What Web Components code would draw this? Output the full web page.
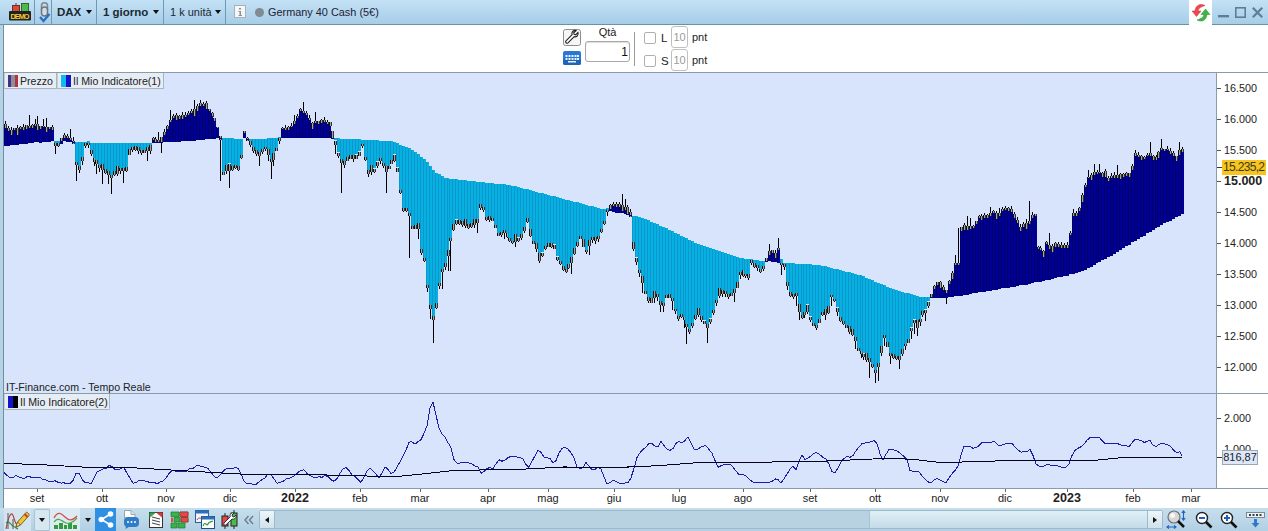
<!DOCTYPE html>
<html lang="it"><head><meta charset="utf-8"><title>DAX</title>
<style>html,body{margin:0;padding:0;background:#fff;overflow:hidden}body{font:11px "Liberation Sans",Arial,sans-serif;color:#222}</style>
</head><body>
<app-shell></app-shell>
<script>
const ICONS={
demo:[24,18,`<rect x="4.5" y="2.5" width="7" height="7" fill="#d64a3a" stroke="#7a2a20"/><path d="M8 0v3" stroke="#7a2a20"/><rect x="13.5" y=".5" width="7" height="9" fill="#52b64a" stroke="#2a6a28"/><rect x="1" y="8" width="22" height="9.5" rx="1" fill="#222"/><text x="12" y="15.6" font-family="Liberation Sans" font-weight="700" font-size="7.4" fill="#f2cc30" text-anchor="middle" textLength="19">DEMO</text>`],
link:[13,21,`<rect x="3.5" y=".8" width="6" height="9.5" rx="3" fill="none" stroke="#7b8790" stroke-width="1.5"/><rect x="3.5" y="5" width="6" height="9" rx="3" fill="#d5dde2" stroke="#6b7780" stroke-width="1.5"/><path d="M2 15l3.500 4 6-7" fill="none" stroke="#2a6fc0" stroke-width="2.200"/>`],
info:[13,14,`<rect x=".5" y=".5" width="11" height="12" fill="#f4f6f7" stroke="#a9b1b6"/><path d="M5 3h2v1.500H5zM4.500 6H7v4h1v1H4.500v-1h1V7h-1z" fill="#8a9297"/>`],
wrench:[18,17,`<rect x=".5" y=".5" width="17" height="16" rx="2" fill="#f6f6f6" stroke="#8d8d8d"/><path d="M15 3.500l-2.300 2.300-1.600-.4-.4-1.600L13 1.600c-2-.7-4.100.7-4.100 2.900 0 .5.100.9.200 1.200L3 11.800c-1.200 1.300.7 3.200 2 2l6.200-6.100c2.300.8 4.700-1.600 3.800-4.200z" fill="#fff" stroke="#222" stroke-width="1.100"/>`],
keyboard:[18,14,`<rect width="18" height="14" rx="2" fill="#2a78d2"/><rect y="8" width="18" height="6" rx="2" fill="#1e64b8"/><path d="M2.500 4h2v2h-2zM5.500 4h2v2h-2zM8.500 4h2v2h-2zM11.500 4h2v2h-2zM14 4h2v2h-2zM2.500 7h2v2h-2zM5.500 7h2v2h-2zM8.500 7h2v2h-2zM11.500 7h2v2h-2zM14 7h2v2h-2zM5 10h8v1.500H5z" fill="#e8f2fc"/>`],
sync:[20,19,`<path d="M14 2.500C9.500 0 4.500 2 4 8H1l4.500 5.500L10 8H7c.4-3 3.500-4.200 7-5.500z" fill="#ec4a4f" stroke="#c93338" stroke-width=".5"/><path d="M6 17c4.500 2.500 9.500.5 10-5.500h3L14.500 6 10 11.500h3c-.4 3-3.500 4.300-7 5.500z" fill="#3fb548" stroke="#2b8f34" stroke-width=".5"/>`],
min:[11,11,`<rect y="8" width="11" height="2.400" fill="#5c7f95"/>`],
max:[11,11,`<rect x=".8" y=".8" width="9.400" height="9.400" fill="none" stroke="#5c7f95" stroke-width="1.600"/>`],
close:[11,11,`<path d="M.8.800l9.400 9.400M10.200.800L.8 10.200" stroke="#5c7f95" stroke-width="2.200"/>`],
pencil:[26,20,`<path d="M1 19C3 9 5 3 7 4s3 12 6 11 3-4 5-6" fill="none" stroke="#b03a3a" stroke-width="1.100"/><path d="M1 13c3-3 5 2 7 3s3 2 5 3" fill="none" stroke="#3a8a3a" stroke-width="1.100"/><path d="M3 3v16M8 9v10" stroke="#555"/><path d="M11 17l1.500-5L21 2.500c1-1 4 2 3 3L15.500 15z" fill="#f2c533" stroke="#7a6420"/><path d="M19.500 4l3 3" stroke="#c23b3b" stroke-width="2"/><path d="M11 17l1.500-5 3 3z" fill="#f4e3c0" stroke="#7a6420"/>`],
ind:[25,20,`<rect x="1" y="15" width="4" height="4" fill="#2f9e3a"/><rect x="6" y="13" width="4" height="6" fill="#2f9e3a"/><rect x="11" y="15" width="3" height="4" fill="#2f9e3a"/><rect x="15" y="13" width="4" height="6" fill="#2f9e3a"/><rect x="20" y="15" width="4" height="4" fill="#2f9e3a"/><path d="M1 8C5 0 9 4 12 7s7 5 12-1" fill="none" stroke="#d0524a" stroke-width="1.300"/><path d="M1 12c4-5 7-2 10 0s8 2 13-4" fill="none" stroke="#58a84f" stroke-width="1.300"/>`],
share:[16,17,`<path d="M12.500 3L3.500 8.500l9 5.500" fill="none" stroke="#fff" stroke-width="1.600"/><circle cx="12.500" cy="3" r="2.800" fill="#fff"/><circle cx="3.300" cy="8.500" r="2.800" fill="#fff"/><circle cx="12.500" cy="14" r="2.800" fill="#fff"/>`],
chat:[17,20,`<path d="M1.500.5H8l4 4V8H1.500z" fill="#fff" stroke="#9aa5ad"/><path d="M8 .5v4h4" fill="#e4e9ed" stroke="#9aa5ad"/><rect x="1" y="7" width="15" height="10" rx="4" fill="#2f7cc9"/><path d="M3 15l-.500 4 5-3z" fill="#2f7cc9"/><circle cx="5" cy="12" r="1" fill="#fff"/><circle cx="8.500" cy="12" r="1" fill="#fff"/><circle cx="12" cy="12" r="1" fill="#fff"/>`],
list:[14,16,`<rect x=".5" y=".5" width="13" height="15" fill="#fff" stroke="#333"/><path d="M7 .5h6.500V6z" fill="#d43b3b"/><path d="M.5 .5H7L.5 6z" fill="#3ba04a"/><path d="M3 5l8 2M3 8l8 2M3 11l8 2" stroke="#444"/>`],
bricks:[17,16,`<path d="M0 0h8v4.500H0zM9 0h8v4.500H9zM3 5.500h6V10H3zM10 5.500h7V10h-7zM0 11h6v5H0zM7 11h7v5H7z" fill="#38b34a" stroke="#1d7a2c" stroke-width=".7"/><path d="M9 0h8v4.500H9zM10 5.500h7V10h-7z" fill="#e24a4a" stroke="#a82c2c" stroke-width=".7"/><path d="M0 5.500h2V10H0z" fill="#e24a4a"/>`],
windows:[20,19,`<rect x=".5" y=".5" width="13" height="12" fill="#eef4fa" stroke="#2a5f9e"/><rect x=".5" y=".5" width="13" height="3" fill="#2f6fb8"/><path d="M2 10c2-4 4 0 6-3" fill="none" stroke="#c33" /><rect x="6.500" y="6.500" width="13" height="12" fill="#fff" stroke="#1f4f8a"/><rect x="6.500" y="6.500" width="13" height="3" fill="#2f6fb8"/><path d="M8 16c2-6 4 1 5-2s3-2 5-3" fill="none" stroke="#2a9a3a" stroke-width="1.200"/>`],
tool:[17,19,`<rect x="1" y="6" width="6" height="10" fill="#e14b4b" stroke="#222"/><path d="M4 3v3M4 16v3M13 0v3M13 16v3" stroke="#222"/><rect x="10" y="3" width="6" height="13" fill="#4dbb4b" stroke="#222"/><path d="M15 5l-2 2-1.500-.5L11 5l2-2c-2-.6-4 .7-4 2.700l.2 1.100L3 13c-1.100 1.200.7 3 1.900 1.900L11 9c2.300.8 4.800-1.500 4-4z" fill="#fff" stroke="#222" stroke-width=".9"/>`],
chev:[10,10,`<path d="M4.500 1L1 5l3.500 4M9 1L5.500 5 9 9" fill="none" stroke="#6d7d88" stroke-width="1.400"/>`],
zoomfit:[20,20,`<circle cx="7" cy="7" r="6" fill="#d7d7d7" stroke="#6f7378" stroke-width="1.200"/><circle cx="5.500" cy="5.500" r="2.500" fill="#fff" opacity=".8"/><path d="M11 11l6 6" stroke="#111" stroke-width="2.500"/><path d="M16.500 1v9M14.800 3l1.700-2.200L18.200 3M14.800 8l1.700 2.200L18.200 8M0 17h9M2 15.300L0 17l2 1.700M7 15.300L9 17l-2 1.700" fill="none" stroke="#1f5fc0" stroke-width="1.100"/>`],
zoomout:[18,18,`<circle cx="7" cy="7" r="5.500" fill="#fff" stroke="#222" stroke-width="1.400"/><path d="M4 7h6" stroke="#1f5fc0" stroke-width="2"/><path d="M11 11l5.500 5.500" stroke="#111" stroke-width="2.600"/>`],
zoomin:[18,18,`<circle cx="7" cy="7" r="5.500" fill="#fff" stroke="#222" stroke-width="1.400"/><path d="M4 7h6M7 4v6" stroke="#1f5fc0" stroke-width="2"/><path d="M11 11l5.500 5.500" stroke="#111" stroke-width="2.600"/>`],
grid:[19,16,`<rect x=".5" y=".5" width="18" height="5" fill="#eef3f6" stroke="#7b8a94"/><path d="M3 2h2v2H3zM6.500 2h2v2h-2zM10 2h2v2h-2zM13.500 2h2v2h-2z" fill="#34414a"/><path d="M8 7h3v4h2.500l-4 4.500-4-4.500H8z" fill="#2f78cf"/>`]
};
class UiIcon extends HTMLElement{connectedCallback(){const [w,h,b]=ICONS[this.getAttribute('name')];this.attachShadow({mode:'open'}).innerHTML=`<style>:host{display:inline-flex;flex:none}svg{display:block;overflow:visible}</style><svg width="${w}" height="${h}" viewBox="0 0 ${w} ${h}">${b}</svg>`}}
customElements.define('ui-icon',UiIcon);

class TbCell extends HTMLElement{connectedCallback(){const w=this.getAttribute('w'),b=this.hasAttribute('bold'),pl=this.getAttribute('pl')||0;this.attachShadow({mode:'open'}).innerHTML=`<style>:host{display:flex;align-items:center;flex:none;width:${w}px;height:24px;box-sizing:border-box;padding-left:${pl}px;border-right:1px solid #6f9ab4;font-size:${b?11.5:11}px;white-space:nowrap;${b?'font-weight:700;':''}color:#1a2a33}
.c{width:0;height:0;border:3px solid transparent;border-top:4px solid #111;border-bottom:0;margin-left:auto;margin-right:4px;flex:none}</style><slot></slot>${this.hasAttribute('caret')?'<span class="c"></span>':''}`}}
customElements.define('tb-cell',TbCell);

class TopBar extends HTMLElement{connectedCallback(){this.attachShadow({mode:'open'}).innerHTML=`<style>
:host{display:flex;height:25px;box-sizing:border-box;border-bottom:1px solid #6f8fa3;background:linear-gradient(#c4e1f5,#a6cde8);align-items:center;padding-left:4px;font-size:11px;color:#223}
.dot{width:9px;height:9px;border-radius:50%;background:#808a90;margin:0 4px 0 8px;flex:none}
.sp{flex:1}.tab{width:23px;height:25px;margin-bottom:-1px;background:#fff;display:flex;align-items:center;justify-content:center;flex:none}
.w{display:flex;gap:6px;width:56px;justify-content:flex-start;padding-left:6px;box-sizing:border-box}.t{white-space:nowrap;font-size:10.900px}
</style>
<tb-cell w="31" pl="4"><ui-icon name="demo"></ui-icon></tb-cell>
<tb-cell w="17" pl="3"><ui-icon name="link"></ui-icon></tb-cell>
<tb-cell w="45" pl="5" bold caret>DAX</tb-cell>
<tb-cell w="67" pl="6" bold caret>1 giorno</tb-cell>
<tb-cell w="62" pl="6" caret>1 k unità</tb-cell>
<span style="width:8px;flex:none"></span><ui-icon name="info"></ui-icon>
<span class="dot"></span><span class="t">Germany 40 Cash (5€)</span>
<span class="sp"></span><span class="tab"><ui-icon name="sync"></ui-icon></span>
<span class="w"><ui-icon name="min"></ui-icon><ui-icon name="max"></ui-icon><ui-icon name="close"></ui-icon></span>`}}
customElements.define('top-bar',TopBar);

class OrderBar extends HTMLElement{connectedCallback(){this.attachShadow({mode:'open'}).innerHTML=`<style>
:host{display:grid;height:48px;box-sizing:border-box;border-bottom:1px solid #8b9ca6;background:#fff;grid-template-columns:18px 45px 1px 44px 17px auto;grid-template-rows:23px 23px;column-gap:0;justify-content:start;padding:1px 0 0 559px;font-size:11px;color:#222}
.i{grid-column:1;display:flex;justify-content:center}
.q{grid-column:2;grid-row:1/3;display:flex;flex-direction:column;align-items:center;margin-left:4px;width:45px}
.q span{height:15px;line-height:13px}
.inp{width:45px;height:21px;box-sizing:border-box;border:1px solid #a8a8a8;border-radius:3px;text-align:right;padding:3px 1px 0 0;font-size:12px;color:#111;box-shadow:inset 0 1px 1px #ddd}
.s{grid-column:3;grid-row:1/3;width:1px;background:#9b9b9b;height:34px;margin:6px 0 0 8px}
.l{display:flex;align-items:center;grid-column:4;padding-left:17px;gap:5px;font-size:11.500px}
.b{width:12px;height:12px;box-sizing:border-box;border:1px solid #b0b0b0;border-radius:2px;background:#fff;flex:none}
.n{grid-column:5;width:17px;height:22px;box-sizing:border-box;border:1px solid #c0c0c0;border-radius:3px;color:#9a9a9a;text-align:center;line-height:20px;font-size:11px}
.p{grid-column:6;padding:0 0 0 4px;line-height:22px;font-size:11px}
</style>
<div class="i" style="grid-row:1;padding-top:3px"><ui-icon name="wrench"></ui-icon></div>
<div class="i" style="grid-row:2;padding-top:2px"><ui-icon name="keyboard"></ui-icon></div>
<div class="q"><span>Qtà</span><div class="inp">1</div></div>
<div class="s"></div>
<div class="l" style="grid-row:1"><span class="b"></span>L</div><div class="n" style="grid-row:1">10</div><div class="p" style="grid-row:1">pnt</div>
<div class="l" style="grid-row:2"><span class="b"></span>S</div><div class="n" style="grid-row:2">10</div><div class="p" style="grid-row:2">pnt</div>`}}
customElements.define('order-bar',OrderBar);

function lerp(pts,x){if(x<=pts[0][0])return pts[0][1];for(let i=1;i<pts.length;i++){if(x<=pts[i][0]){const[a,b]=pts[i-1],[c,d]=pts[i];return b+(d-b)*(x-a)/(c-a||1)}}return pts[pts.length-1][1]}
let seed=12345;const R=()=>{seed=(seed*16807)%2147483647;return seed/2147483647};
const MA=[[4,146],[30,143],[60,141],[100,143],[150,143],[190,141],[220,138],[250,139],[280,138],[330,138],[390,141],[410,148],[425,160],[435,172],[445,178],[480,182],[510,185],[560,198],[610,211],[640,217],[670,230],[700,245],[740,258],[770,262],[820,265],[860,275],[890,288],[920,297],[945,298],[1013,287],[1057,278],[1080,272],[1090,267],[1110,256],[1153,230],[1183,213]];
const PX=[[5,125],[10,131],[20,126],[30,126],[36,124],[45,127],[52,127],[53,143],[57,147],[62,136],[70,137],[73,140],[77,172],[81,165],[85,145],[88,143],[93,160],[100,167],[110,177],[120,170],[126,170],[130,148],[140,152],[150,150],[152,138],[160,140],[165,130],[172,116],[180,116],[190,112],[200,103],[207,104],[215,120],[220,135],[221,175],[226,170],[235,168],[240,170],[243,130],[248,140],[252,148],[258,155],[265,148],[272,162],[278,145],[282,128],[290,127],[300,110],[305,112],[312,122],[320,120],[330,122],[333,135],[338,155],[342,165],[350,158],[358,157],[362,145],[368,172],[375,170],[380,160],[387,173],[393,157],[398,175],[402,210],[408,210],[412,228],[418,228],[420,250],[425,263],[428,300],[433,320],[437,303],[440,275],[447,262],[450,240],[455,222],[465,225],[470,228],[477,222],[481,202],[485,217],[493,220],[497,235],[505,232],[510,242],[520,240],[527,222],[530,235],[536,248],[538,262],[545,248],[553,245],[557,258],[565,272],[570,265],[575,250],[580,238],[587,255],[590,240],[597,240],[603,227],[607,212],[610,205],[617,203],[622,205],[627,207],[630,212],[631,237],[635,257],[640,275],[645,293],[650,303],[656,295],[662,308],[667,293],[672,300],[675,310],[678,318],[683,315],[688,333],[692,325],[697,312],[702,320],[707,328],[713,312],[717,300],[720,292],[730,296],[736,290],[740,275],[748,277],[750,262],[757,268],[762,272],[765,262],[768,250],[775,252],[778,247],[780,262],[785,268],[788,293],[793,297],[797,295],[798,310],[803,318],[806,308],[811,322],[816,327],[822,315],[828,312],[832,290],[835,305],[840,320],[848,330],[853,335],[858,350],[865,358],[870,362],[875,372],[880,362],[883,333],[890,355],[900,358],[905,345],[910,340],[912,318],[918,328],[922,315],[927,308],[930,298],[935,283],[942,282],[945,298],[947,282],[950,280],[955,263],[958,262],[960,228],[962,225],[975,226],[977,217],[988,215],[992,210],[998,215],[1003,208],[1010,208],[1017,220],[1020,226],[1028,222],[1032,215],[1035,215],[1037,245],[1043,250],[1047,240],[1050,248],[1055,243],[1062,245],[1067,245],[1070,232],[1072,213],[1078,213],[1083,190],[1088,177],[1093,172],[1105,172],[1107,178],[1115,175],[1130,173],[1133,163],[1135,153],[1143,157],[1150,153],[1155,158],[1160,148],[1167,149],[1173,153],[1177,157],[1180,148],[1183,150]];
const SP=[[54,153],[77,180],[102,183],[111,193],[123,182],[162,152],[220,180],[228,187],[270,178],[303,102],[35,119],[342,192],[387,192],[410,257],[432,342],[442,288],[449,270],[624,199],[687,343],[707,342],[868,377],[878,380],[900,368],[917,335],[925,320],[959,228],[1149,142],[1030,201],[1099,164],[967,216],[971,218],[1048,233],[945,303]];
function priceSvg(){let wk='',bd='',fl='';const P=2.95;
 for(let i=0;i<402;i++){const xf=4.5+i*P;if(xf>1182)break;const x=Math.floor(xf),m=lerp(MA,x+1);let e=lerp(PX,x+1)+(R()-.5)*1.6;const up=e<m;
  const rr=R(),b=rr<.25?4+R()*3:1.5+R()*2,p=up?e+b:e-b;
  let w=R()<.2?3+R()*8:R()*3;let tip=up?e-w:e+w;
  for(const s of SP){if(Math.abs(s[0]-x-1)<=1.5){tip=s[1]}}
  const h=Math.abs(tip-e);
  wk+=`<rect x="${x+1}" y="${Math.round(Math.min(tip,e))}" width="1" height="${Math.round(h)+1}" fill="#000"/>`;
  const by=Math.round(Math.min(e,p)),bh=Math.round(Math.abs(e-p))+1;
  bd+=`<rect x="${x}" y="${by}" width="1" height="${bh}" fill="#111"/><rect x="${x+1}" y="${by}" width="1" height="${bh}" fill="#a4a4a4"/><rect x="${x+2}" y="${by}" width="1" height="${bh}" fill="#333"/>`;
  const t=Math.round(Math.min(p,m)),hh=Math.max(1,Math.round(Math.abs(p-m)));
  const nextx=Math.floor(xf+P),ww=nextx-x;
  fl+=up?`<rect x="${x}" y="${t}" width="${ww}" height="${hh}" fill="#000096"/><rect x="${x}" y="${t}" width="1" height="${hh}" fill="#00006a"/>`:`<rect x="${x}" y="${t}" width="${ww}" height="${hh}" fill="#06b0e2"/><rect x="${x}" y="${t}" width="1" height="${hh}" fill="#0a98cb"/>`;
 }return wk+bd+fl}
const mapZ=(a,f)=>a.map(([x,y])=>f(x,y));
const B1=[[10,265],[25,280],[40,270],[55,280],[70,275],[100,280],[120,290],[135,288],[150,295],[175,295],[190,258],[205,293],[225,295],[235,265],[250,255],[270,242],[285,255],[305,248],[325,297],[340,285],[385,295],[400,290],[420,258],[450,260],[490,240],[510,250],[530,280],[555,250],[585,250],[600,295],[630,297],[660,265],[680,295],[720,275],[740,252],[770,280],[800,272],[820,292],[845,243],[860,265],[885,292],[905,248],[930,278],[945,240],[962,272],[995,195],[1005,165],[1015,180],[1030,165],[1045,130],[1055,55],[1062,52],[1070,100],[1078,145],[1090,155],[1105,190],[1115,235],[1145,230],[1170,245],[1180,268],[1195,245],[1210,250],[1222,222],[1235,230],[1250,212],[1280,218],[1295,250],[1320,190],[1335,222],[1345,215],[1358,238],[1375,188],[1388,188],[1405,215],[1415,250],[1425,255],[1437,230],[1450,255],[1470,245],[1488,298],[1505,285],[1515,295],[1540,295]];
const B2=[[0,265],[25,265],[45,185],[60,165],[78,140],[95,160],[108,140],[125,165],[135,165],[152,135],[163,145],[178,127],[195,168],[225,150],[245,185],[255,215],[290,208],[310,240],[330,240],[345,262],[380,265],[410,252],[420,265],[450,212],[462,225],[472,175],[485,195],[512,172],[540,195],[558,238],[585,188],[605,185],[628,150],[650,142],[668,133],[685,197],[705,160],[725,168],[750,195],[760,235],[775,225],[810,265],[825,247],[850,265],[885,210],[895,158],[905,153],[930,160],[945,145],[965,143],[975,137],[990,155],[1005,145],[1025,145],[1045,172],[1065,172],[1072,160],[1088,210],[1105,218],[1115,208],[1135,210],[1160,220],[1170,215],[1185,170],[1205,155],[1232,125],[1250,125],[1270,147],[1300,145],[1330,155],[1347,130],[1370,143],[1385,137],[1395,155],[1420,145],[1440,155],[1452,175],[1462,167],[1468,182]];
const K1=[[10,235],[115,240],[230,248],[305,247],[420,255],[530,263],[600,268],[800,270],[900,273],[985,273],[1050,265],[1100,258],[1200,254],[1290,252],[1380,246],[1540,247]];
const K2=[[0,217],[100,212],[190,204],[300,202],[500,200],[660,192],[720,190],[780,195],[840,203],[950,199],[1050,196],[1170,198],[1250,195],[1320,187],[1468,187]];
const f1=(x,y)=>[x/2.45,385+y/3],f2=(x,y)=>[620+x/2.613,395+y/3];
const blue=[[4,472.500],...mapZ(B1,f1),...mapZ(B2,f2)],black=[...mapZ(K1,f1),...mapZ(K2,f2)];
const pstr=a=>a.map(p=>p[0].toFixed(1)+','+p[1].toFixed(1)).join(' ');
function jag(a){const o=[];const end=a[a.length-1][0];for(let x=a[0][0];x<end;x+=3){o.push([x,lerp(a,x)+(R()-.5)*1.6])}o.push(a[a.length-1]);return o}

class LegendTab extends HTMLElement{connectedCallback(){const s=(this.getAttribute('colors')||'').split(',');this.attachShadow({mode:'open'}).innerHTML=`<style>:host{display:inline-flex;align-items:center;height:16px;box-sizing:border-box;background:#e6edf5;border:1px solid #a9b6c0;border-left-color:#c5ced6;border-top:0;padding:0 2px 0 3px;gap:2px;font-size:10.600px;color:#222;white-space:nowrap;width:var(--w)}.s{display:flex;height:12px;width:10px;flex:none}.s i{flex:1}</style><span class="s">${s.map(c=>`<i style="background:${c}"></i>`).join('')}</span><slot></slot>`}}
customElements.define('legend-tab',LegendTab);

const axisText=(x,y,t,b)=>`<text x="${x}" y="${y}" font-family="Liberation Sans" font-size="${b?12.5:10.800}" ${b?'font-weight="700"':''} fill="#222" shape-rendering="auto">${t}</text>`;
class PriceChart extends HTMLElement{connectedCallback(){
 let ax='';[['16.500',88],['16.000',119],['15.500',150],['15.000',181,1],['14.500',212],['14.000',243],['13.500',274],['13.000',305],['12.500',336],['12.000',367]].forEach(([t,y,b])=>{ax+=`<rect x="1217" y="${y}" width="4" height="1" fill="#555"/>`+axisText(1224,y+4,t,b)});
 this.attachShadow({mode:'open'}).innerHTML=`<style>:host{display:block;position:relative;height:321px;border-bottom:1px solid #8b9ca6;box-sizing:border-box;background:#fff}svg{display:block}
 .lg{position:absolute;left:0;top:0;display:flex}.src{position:absolute;left:2px;top:308px;font-size:10.600px;color:#222;white-space:nowrap}</style>
 <svg width="1264" height="320" viewBox="4 73 1264 320" shape-rendering="crispEdges"><rect x="4" y="73" width="1212" height="320" fill="#d7e4fb"/><rect x="1216" y="73" width="1" height="320" fill="#8b9ca6"/>${priceSvg()}${ax}
 <rect x="1217" y="167" width="5" height="1" fill="#333"/><rect x="1222" y="160" width="44" height="15" fill="#f8c51c"/><text x="1223" y="171" font-family="Liberation Sans" font-size="12" fill="#3a3a20" textLength="42">15.235,2</text></svg>
 <div class="lg"><legend-tab style="--w:53px" colors="#44308a,#8a8f98,#b4343c">Prezzo</legend-tab><legend-tab style="--w:107px" colors="#14b8f0,#1414c8">Il Mio Indicatore(1)</legend-tab></div>
 <div class="src">IT-Finance.com - Tempo Reale</div>`}}
customElements.define('price-chart',PriceChart);

class OscChart extends HTMLElement{connectedCallback(){
 this.attachShadow({mode:'open'}).innerHTML=`<style>:host{display:block;position:relative;height:95px;box-sizing:border-box;border-bottom:1px solid #8b9ca6;background:#fff}svg{display:block}
 .lg{position:absolute;left:0;top:0;display:flex}.tag{position:absolute;left:1218px;top:56px;width:36px;height:15px;box-sizing:border-box;background:#dde7f5;border:1px solid #9aa8b3;font-size:11px;line-height:13px;text-align:center;color:#223;white-space:nowrap}</style>
 <svg width="1264" height="94" viewBox="4 394 1264 94"><rect x="4" y="394" width="1212" height="94" fill="#d7e4fb"/><rect x="1216" y="394" width="1" height="94" fill="#8b9ca6"/>
 <polyline points="${pstr(jag(blue))}" fill="none" stroke="#1c1ca8" stroke-width="1" shape-rendering="crispEdges"/><polyline points="${pstr(black)}" fill="none" stroke="#000020" stroke-width="1" shape-rendering="crispEdges"/>
 <rect x="1217" y="418" width="4" height="1" fill="#555"/><rect x="1217" y="457" width="5" height="1" fill="#333"/>${axisText(1224,422,'2.000')}${axisText(1224,453,'1.000')}</svg>
 <div class="lg"><legend-tab style="--w:106px;border-bottom-right-radius:2px" colors="#1414c8,#000">Il Mio Indicatore(2)</legend-tab></div><div class="tag">816,87</div>`}}
customElements.define('osc-chart',OscChart);

class TimeAxis extends HTMLElement{connectedCallback(){
 const L=[['set',37],['ott',102],['nov',166],['dic',230],['2022',295,1],['feb',360],['mar',420],['apr',488],['mag',548],['giu',614],['lug',679],['ago',743],['set',810],['ott',875],['nov',940],['dic',1005],['2023',1067,1],['feb',1133],['mar',1191]];
 this.attachShadow({mode:'open'}).innerHTML=`<style>:host{display:block;height:19px;background:#fff}svg{display:block}</style><svg width="1264" height="19" viewBox="4 489 1264 19">${L.map(([t,x,b])=>`<rect x="${x}" y="489" width="1" height="3" fill="#666"/><text x="${x}" y="502" text-anchor="middle" font-family="Liberation Sans" font-size="${b?12.500:11}" ${b?'font-weight="700"':''} fill="#222">${t}</text>`).join('')}</svg>`}}
customElements.define('time-axis',TimeAxis);

class BottomBar extends HTMLElement{connectedCallback(){this.attachShadow({mode:'open'}).innerHTML=`<style>
:host{display:flex;align-items:center;height:23px;background:linear-gradient(#c6dfee,#b2d0e3);box-sizing:border-box}
.c{width:0;height:0;border:3.500px solid transparent;border-top:4px solid #111;border-bottom:0;display:block}
.cell{display:flex;align-items:center;justify-content:center;height:23px;flex:none;box-sizing:border-box}
.btn{background:#d7e7f1;border:1px solid #a9c3d3;height:22px;border-radius:2px}
.sb{display:flex;flex:none;margin-left:5px;width:904px;height:19px;border:1px solid #9fb9c9;box-sizing:border-box;border-radius:2px}
.a{width:14px;flex:none;background:linear-gradient(#eef6fa,#cfe2ec);display:flex;align-items:center;justify-content:center}
.a:first-child{border-right:1px solid #9fb9c9}.a:last-child{border-left:1px solid #9fb9c9}
.t{width:594px;flex:none;background:#b9d2e1}.th{flex:1;background:linear-gradient(#dff0f6,#c4dbe8);border-left:1px solid #a9c3d3}
.l{border:3.500px solid transparent;border-right:4px solid #111;border-left:0}.r{border:3.500px solid transparent;border-left:4px solid #111;border-right:0}
</style>
<span class="cell" style="width:4px"></span>
<span class="cell" style="width:27px;background:#d2e4ef"><ui-icon name="pencil"></ui-icon></span>
<span class="cell btn" style="width:16px;margin-left:3px"><i class="c"></i></span>
<span class="cell" style="width:30px;background:#dcebf3"><ui-icon name="ind"></ui-icon></span>
<span class="cell" style="width:15px"><i class="c"></i></span>
<span class="cell" style="width:21px;background:#2f8fe2"><ui-icon name="share"></ui-icon></span>
<span class="cell" style="width:31px"><ui-icon name="chat"></ui-icon></span>
<span class="cell" style="width:18px"><ui-icon name="list"></ui-icon></span>
<span class="cell" style="width:29px"><ui-icon name="bricks"></ui-icon></span>
<span class="cell" style="width:22px"><ui-icon name="windows"></ui-icon></span>
<span class="cell" style="width:27px"><ui-icon name="tool"></ui-icon></span>
<span class="cell" style="width:11px;justify-content:flex-end"><ui-icon name="chev"></ui-icon></span>
<div class="sb"><span class="a"><i class="l"></i></span><span class="t"></span><span class="th"></span><span class="a"><i class="r"></i></span></div>
<span class="cell" style="width:28px"><ui-icon name="zoomfit"></ui-icon></span>
<span class="cell" style="width:25px"><ui-icon name="zoomout"></ui-icon></span>
<span class="cell" style="width:26px"><ui-icon name="zoomin"></ui-icon></span>
<span class="cell" style="width:26px"><ui-icon name="grid"></ui-icon></span>`}}
customElements.define('bottom-bar',BottomBar);

class AppShell extends HTMLElement{connectedCallback(){this.attachShadow({mode:'open'}).innerHTML=`<style>:host{display:block;width:1268px;height:531px;overflow:hidden;font:11px "Liberation Sans",Arial,sans-serif}
.m{display:flex}.strip{width:4px;flex:none;background:#b5d3e7;border-right:1px solid #71909f;box-sizing:border-box}.col{flex:1;min-width:0}
</style><top-bar></top-bar><div class="m"><div class="strip"></div><div class="col"><order-bar></order-bar><price-chart></price-chart><osc-chart></osc-chart><time-axis></time-axis></div></div><bottom-bar></bottom-bar>`}}
customElements.define('app-shell',AppShell);
</script></body></html>
